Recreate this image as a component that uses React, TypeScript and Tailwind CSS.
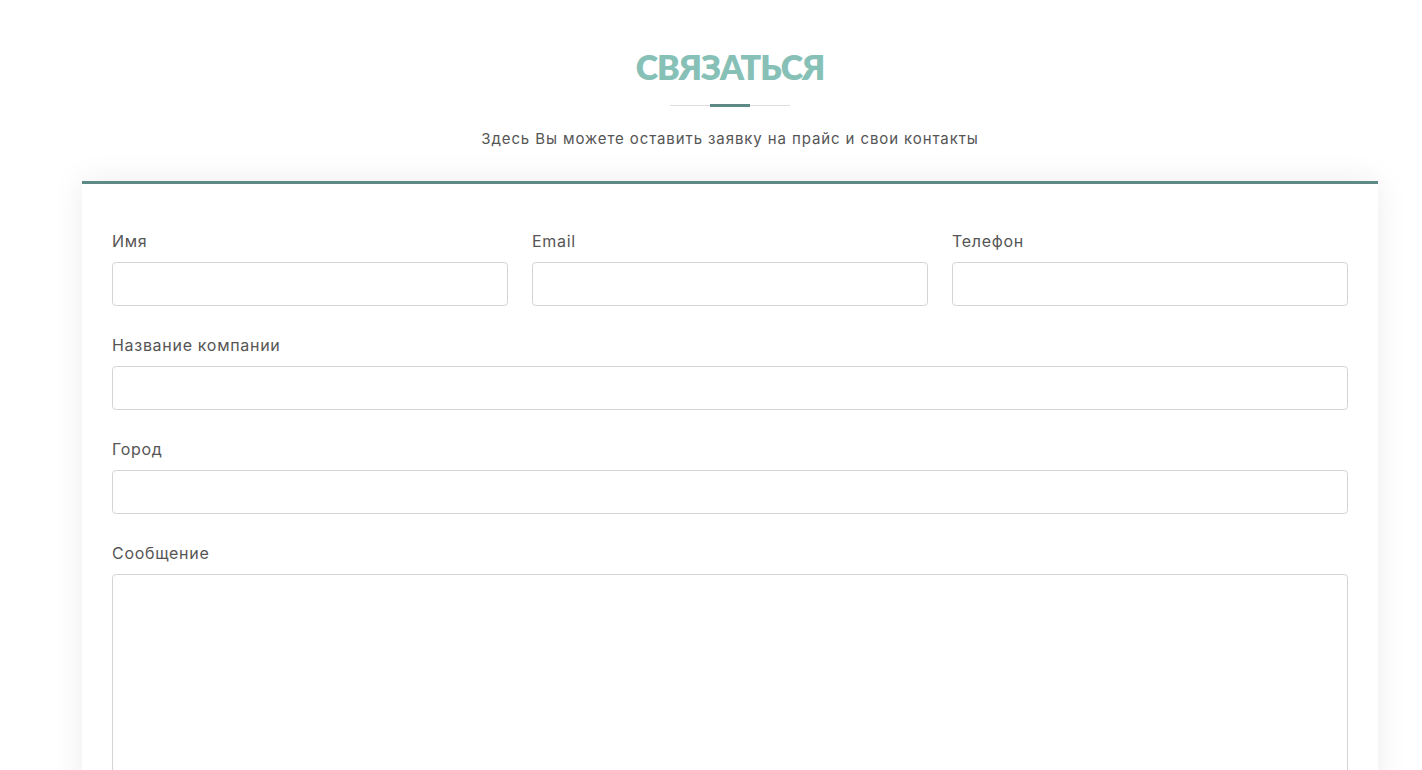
import React from "react";

function Field({ label, textarea }: { label: string; textarea?: boolean }) {
  return (
    <div className="flex flex-col">
      <label className="mb-[11px] h-5 text-[16px] leading-5 tracking-[0.7px] text-[#555]">{label}</label>
      {textarea ? (
        <textarea className="h-[220px] w-full resize-none rounded border border-[#d4d4d4] outline-none" />
      ) : (
        <input className="h-11 w-full rounded border border-[#d4d4d4] px-3 outline-none" />
      )}
    </div>
  );
}

export default function App() {
  return (
    <div className="min-h-screen bg-white pb-20" style={{ fontFamily: "Inter, 'Noto Sans', sans-serif" }}>
      <div className="ml-[82px] w-[1296px]">
        <div className="flex flex-col items-center pt-[47px]">
          <h2
            className="text-[34px] font-extrabold leading-10 tracking-[-1px] text-[#86c0b6]"
            style={{ fontFamily: "Lato, 'Liberation Sans', sans-serif" }}
          >
            СВЯЗАТЬСЯ
          </h2>
          <div className="mt-[17px] flex w-[120px] items-center">
            <div className="h-px flex-1 bg-[#dedede]" />
            <div className="h-[3px] w-10 bg-[#5e8a86]" />
            <div className="h-px flex-1 bg-[#dedede]" />
          </div>
          <p className="mt-[22px] text-[15px] leading-5 tracking-[0.9px] text-[#555]">
            Здесь Вы можете оставить заявку на прайс и свои контакты
          </p>
        </div>
        <div className="mt-[32px] border-t-[3px] border-[#5e8a86] bg-white px-[30px] pb-10 pt-[47px] shadow-[0_0_30px_rgba(0,0,0,0.08)]">
          <div className="flex flex-col gap-[29px]">
            <div className="grid grid-cols-3 gap-6">
              <Field label="Имя" />
              <Field label="Email" />
              <Field label="Телефон" />
            </div>
            <Field label="Название компании" />
            <Field label="Город" />
            <Field label="Сообщение" textarea />
          </div>
        </div>
      </div>
    </div>
  );
}
